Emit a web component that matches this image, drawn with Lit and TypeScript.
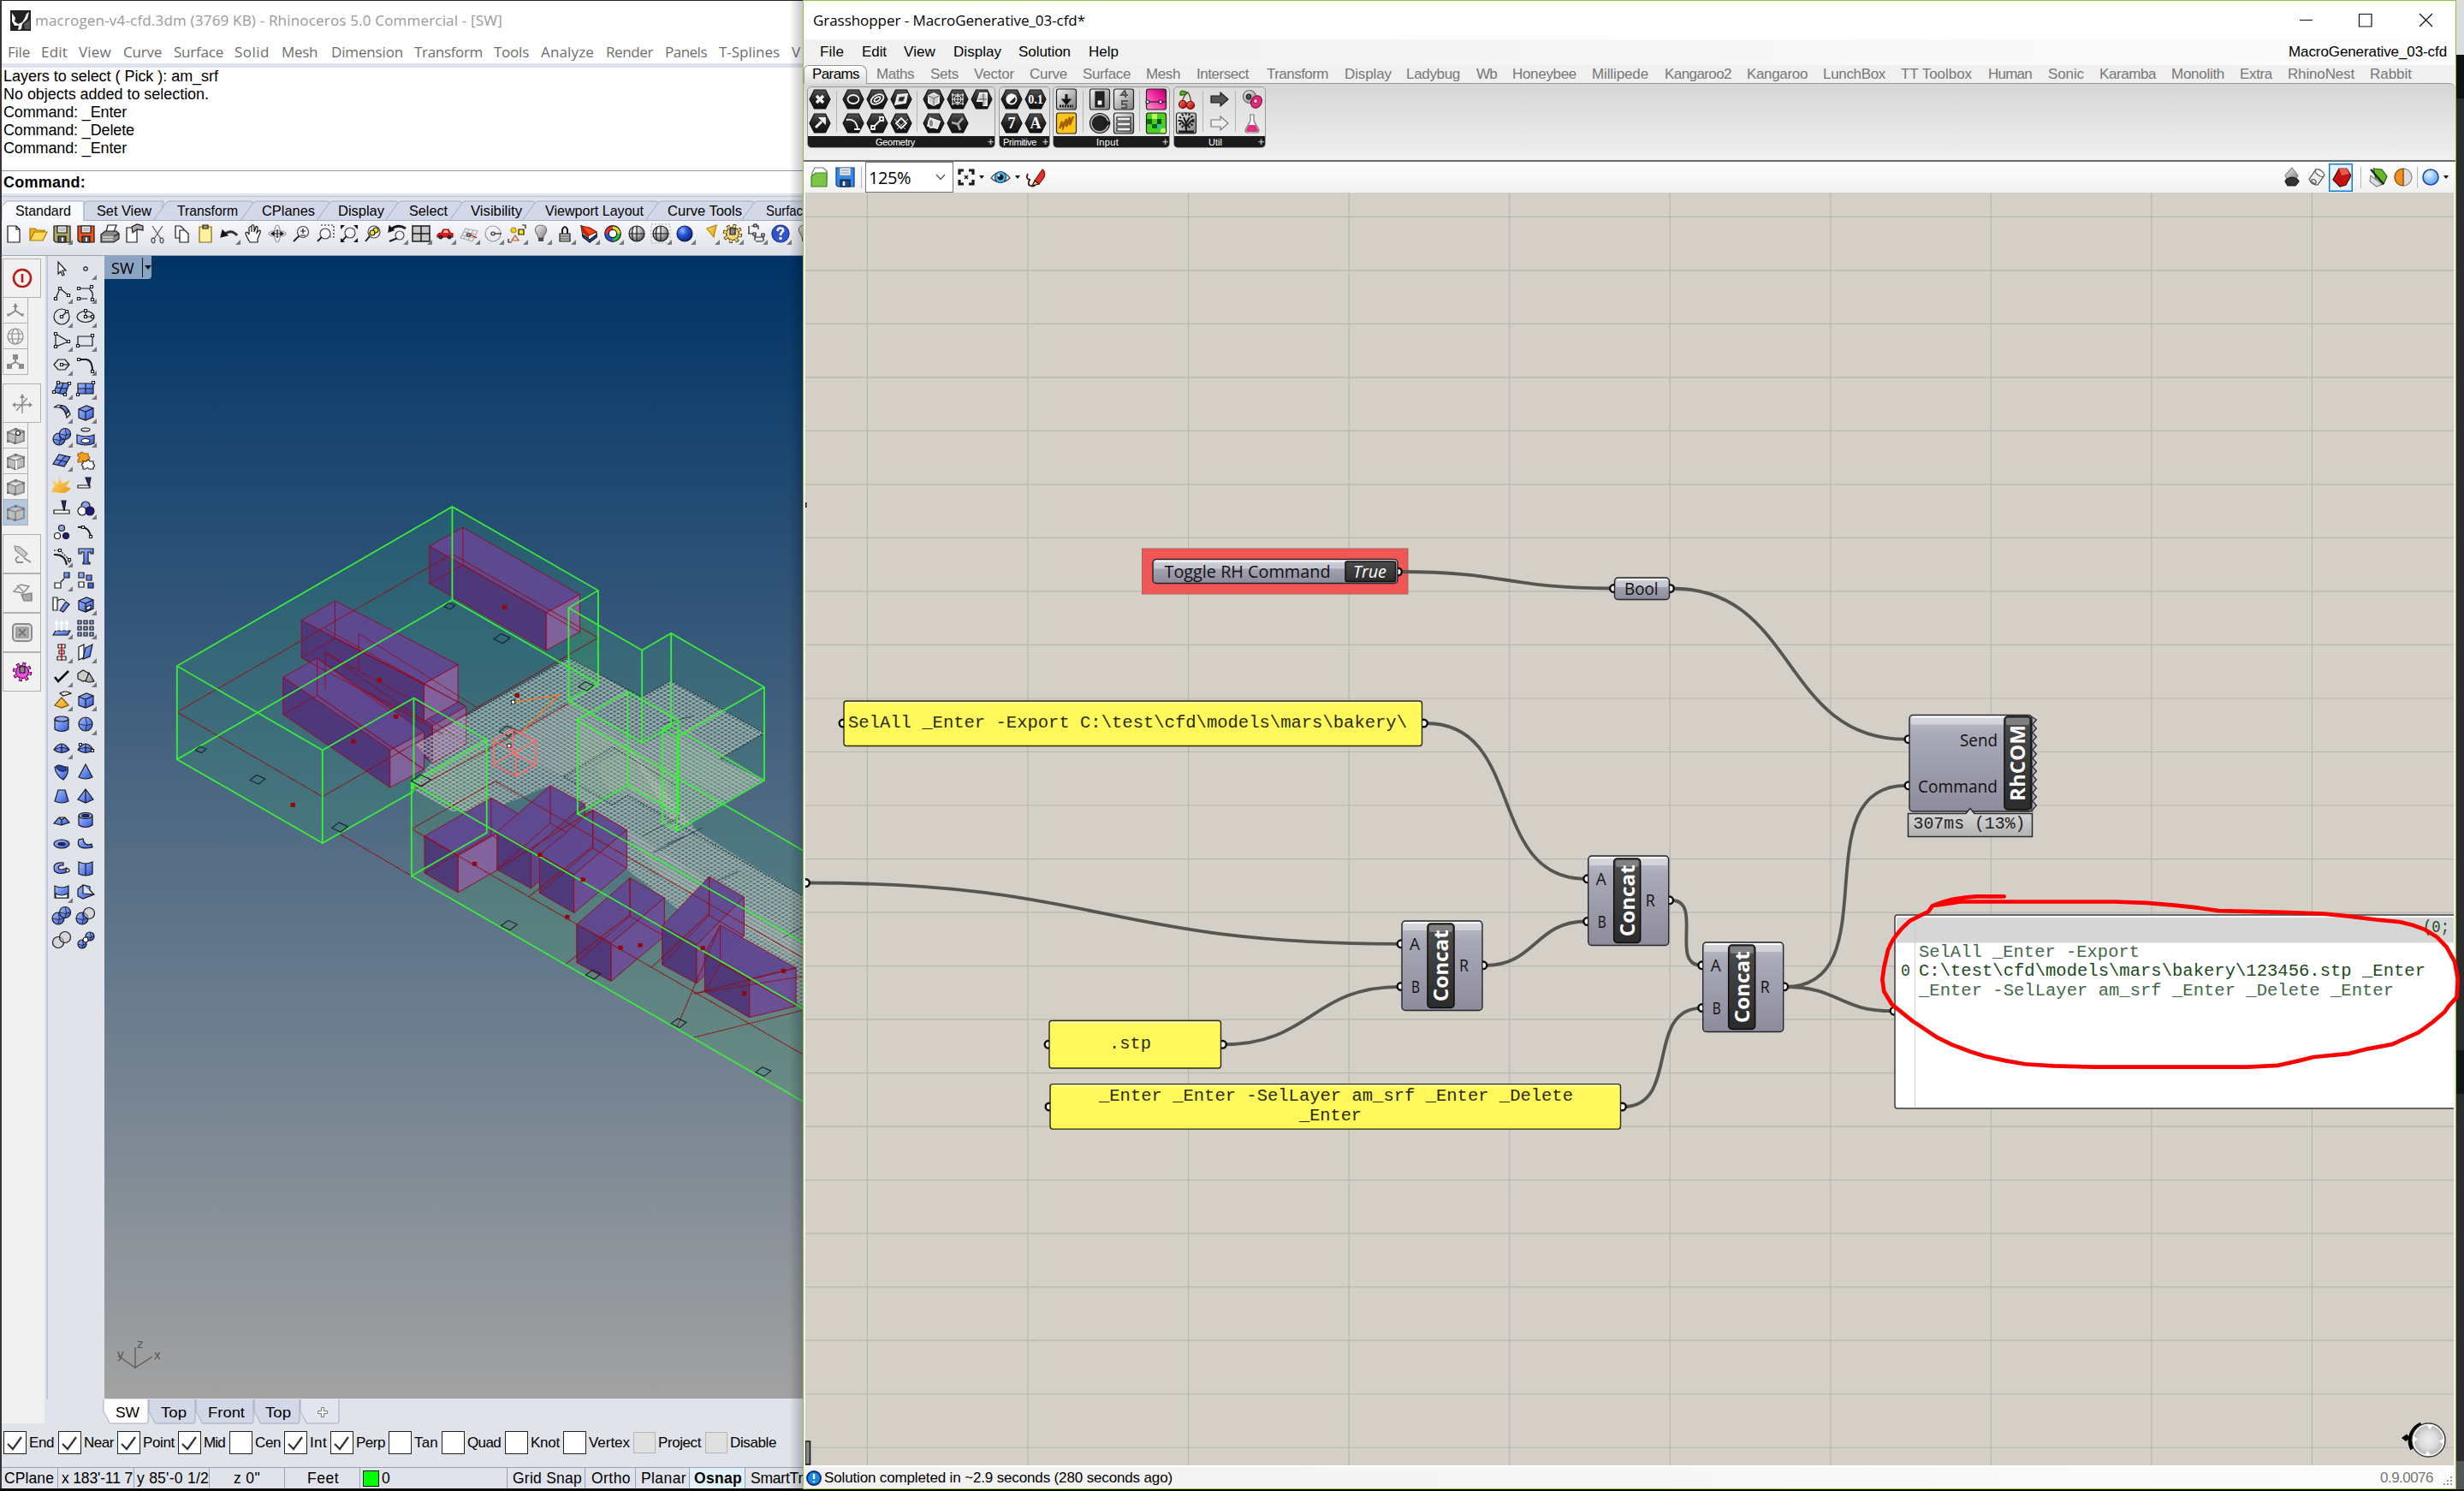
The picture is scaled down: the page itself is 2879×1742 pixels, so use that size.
import { LitElement, html, css, svg } from "lit";
import { customElement, property } from "lit/decorators.js";
import { unsafeSVG } from "lit/directives/unsafe-svg.js";
import { styleMap } from "lit/directives/style-map.js";

type Span = [string, number, number];

/* ---------- text that keeps a fixed advance width ---------- */
@customElement("fit-label")
class FitLabel extends LitElement {
  @property() text = "";
  @property({ type: Number }) w = 0;
  static styles = css`
    :host { display: block; flex: none; white-space: pre; overflow: visible; }
    span { display: inline-block; }
  `;
  firstUpdated() {
    this.style.width = `${this.w}px`;
    const s = this.renderRoot.querySelector("span") as HTMLElement;
    const natural = s.getBoundingClientRect().width;
    if (this.w && natural) s.style.letterSpacing = `${(this.w + 1 - natural) / this.text.length}px`;
  }
  render() { return html`<span>${this.text}</span>`; }
}

/* items laid in a row; the gap before each comes from its start and the previous end */
const flow = (items: Span[], origin: number, cls = "") => {
  let prev = origin;
  return items.map(([t, a, b]) => {
    const gap = a - prev;
    prev = b;
    return html`<fit-label class=${cls} .text=${t} .w=${b - a} style=${styleMap({ marginLeft: gap + "px" })}></fit-label>`;
  });
};
const space = (n: number) => html`<div style=${styleMap({ width: n + "px" })}></div>`;

/* ---------- icons, drawn around 0,0 in a 28px cell ---------- */
const DEFS = `<defs>
<linearGradient id="bl" x1="0" y1="0" x2="1" y2="1"><stop offset="0" stop-color="#a9bdff"/><stop offset=".5" stop-color="#6a8cf0"/><stop offset="1" stop-color="#2f52cc"/></linearGradient>
<radialGradient id="bb" cx=".35" cy=".3" r=".75"><stop offset="0" stop-color="#9fc0ff"/><stop offset=".4" stop-color="#2a5ae0"/><stop offset="1" stop-color="#0a1c70"/></radialGradient>
<radialGradient id="gb" cx=".35" cy=".3" r=".8"><stop offset="0" stop-color="#fff"/><stop offset=".5" stop-color="#b4b4b4"/><stop offset="1" stop-color="#444"/></radialGradient>
<linearGradient id="gy" x1="0" y1="0" x2="1" y2="1"><stop offset="0" stop-color="#f4f4f4"/><stop offset="1" stop-color="#7d7d7d"/></linearGradient>
<linearGradient id="or" x1="0" y1="0" x2="1" y2="1"><stop offset="0" stop-color="#ffe27a"/><stop offset="1" stop-color="#f0930c"/></linearGradient>
<linearGradient id="dk" x1="0" y1="0" x2="0" y2="1"><stop offset="0" stop-color="#555"/><stop offset=".5" stop-color="#222"/><stop offset="1" stop-color="#111"/></linearGradient>
<linearGradient id="rd" x1="0" y1="0" x2="1" y2="1"><stop offset="0" stop-color="#ff7a6a"/><stop offset="1" stop-color="#a00000"/></linearGradient>
<linearGradient id="pk" x1="0" y1="1" x2="1" y2="0"><stop offset="0" stop-color="#ff9ad0"/><stop offset=".6" stop-color="#f020a0"/><stop offset="1" stop-color="#a00060"/></linearGradient>
<radialGradient id="sb" cx=".4" cy=".3" r=".7"><stop offset="0" stop-color="#e4f4ff"/><stop offset="1" stop-color="#5aa4ee"/></radialGradient>
</defs>`;
const defs = html`<svg class="defs" width="0" height="0">${unsafeSVG(DEFS)}</svg>`;
const icon = (s: string, more = false) => html`<svg class="ic" width="28" height="28" viewBox="-14 -14 28 28">${unsafeSVG(
  `<g fill="none" stroke="#1a1a1a" stroke-width="1.2">${s}</g>` + (more ? `<path d="M13 7V13H7Z" fill="#777"/>` : "")
)}</svg>`;

const floppy = (c: string) => `<path d="M-9-9H10V10H-7L-9 8Z" fill="${c}"/><path d="M-5-9H6V-1H-5Z" fill="#e8e8e8"/><path d="M-3-6H4M-3-4H4" stroke="#999"/><path d="M-4 3H5V10H-4Z" fill="#555"/><path d="M1 4.500V9" stroke="#fff" stroke-width="2"/>`;
const lens = (x = 2, y = -2, r = 6.5) => `<circle cx="${x}" cy="${y}" r="${r}" fill="#f4f5f8" stroke="#444"/><path d="M${x - r * 0.7} ${y + r * 0.7}L-9 9" stroke-width="1.900"/>`;
const bulb = `<path d="M0-10C-5-10-8-6-6-2C-5 1-3 2-3 5H3C3 2 5 1 6-2C8-6 5-10 0-10Z" fill="url(#gy)" stroke="#777"/><path d="M-3 6H3M-3 8H3" stroke-width="1.600"/>`;
const globe = `<circle r="9" fill="url(#gb)"/><path d="M-9 0H9M0-9V9M-4-8Q-7 0-4 8"/>`;
const gear = (c: string, k: string) => `<circle r="7.500" fill="${c}" stroke="${k}"/><circle r="9" stroke="${k}" stroke-width="4.500" stroke-dasharray="3.600 3.480"/><circle r="8.600" stroke="${c}" stroke-width="3.200" stroke-dasharray="2.400 4.350" stroke-dashoffset="-.6"/><path d="M-3-6H3V1H-3Z" fill="#888"/>`;
const page = (x: number, y: number, w: number, h: number) => `<path d="M${x} ${y}H${x + w - 4}L${x + w} ${y + 4}V${y + h}H${x}Z" fill="#fff"/>`;

const STD: [string, boolean?][] = [
  [`<path d="M-7-9H3L7-5V10H-7Z" fill="#fff"/><path d="M3-9V-5H7"/>`],
  [`<path d="M-9 7V-6H-3L-1-4H8V-1" fill="#f0b020" stroke="#a87800"/><path d="M-9 8L-4-2H11L6 8Z" fill="#ffd95a" stroke="#a87800"/>`],
  [floppy("#aaa763"), true],
  [floppy("#f2521b")],
  [`<path d="M-4-2L-2-10H8L5-2Z" fill="#fff"/><path d="M-10 1L-5-3H8L11 0V6L5 10H-10Z" fill="#888"/><path d="M-8 4H4M-8 7H4" stroke="#fff"/><path d="M5 3L11 0" />`],
  [`<path d="M-8-7H4V10H-8Z" fill="#fff"/><path d="M-2-8L4-11L11-9V-4L4-5L-1-1Z" fill="#aaa"/>`],
  [`<path d="M-6-9L4 6M6-9L-4 6" stroke="#555"/><ellipse cx="-5" cy="8" rx="2" ry="2.800" stroke="#444"/><ellipse cx="5" cy="8" rx="2" ry="2.800" stroke="#444"/>`],
  [page(-7, -9, 10, 14) + page(-2, -4, 10, 14)],
  [`<path d="M-7-8H7V10H-7Z" fill="#fff3a0" stroke="#7a6a10"/><path d="M-3-10H3V-6H-3Z" fill="#bba24a"/>`],
  [`<path d="M-6 1Q2-6 9 2" stroke="#333" stroke-width="3"/><path d="M-10 4L-8-4L-2 2Z" fill="#111"/>`, true],
  [`<path d="M-4 10Q-9 2-9-1Q-7-3-5 1L-5-7Q-3-10-2-7V-2-9Q0-12 1-8V-2L3-8Q5-10 5-6L4-1L7-4Q9-4 8-1L5 6V10Z" fill="#fff"/>`],
  [`<ellipse rx="10" ry="3.500" stroke="#999"/><ellipse rx="3.500" ry="10" stroke="#999"/><path d="M-5 0H5M0-5V5"/><path d="M-7 0l3-2v4zM7 0l-3-2v4z" fill="#111"/>`],
  [lens() + `<path d="M-1-3H5M2-6V0M-1 2H5"/>`],
  [lens(0, 0, 6) + `<path d="M-5-10H10V4H6" stroke-dasharray="2 2"/>`],
  [lens(1, -1, 6) + `<path d="M-10-10h5l-5 5zM10-10h-5l5 5zM-10 10h5l-5-5zM10 10h-5l5-5z" fill="#111" stroke="none"/>`],
  [lens(1, -2, 7) + `<circle cx="3" cy="-4" r="3" fill="#ffe600"/><circle cx="-1" cy="-1" r="3" fill="#ffe600"/>`],
  [lens(3, 2, 5) + `<path d="M-7-5Q1-12 10-6" stroke-width="3"/><path d="M-10-2L-9-9L-4-4Z" fill="#111"/>`, true],
  [`<path d="M-10-9H10V9H-10ZM0-9V9M-10 0H10" fill="#c6c6c6" stroke-width="1.500"/>`, true],
  [`<path d="M-9 2Q-8-1-4-1L-2-5H4L6-1L9 0V4H-9Z" fill="#e81a1a" stroke="#a00"/><path d="M-1-4H3L4-1H-2Z" fill="#fbb" stroke="none"/><circle cx="-5" cy="4" r="2" fill="#333"/><circle cx="5" cy="4" r="2" fill="#333"/>`, true],
  [`<path d="M-4-6L10-3L4 9L-10 5ZM0-5L-6 6M5-4L-1 7M-6-2L8 1M-8 2L6 5" stroke="#aaa"/><path d="M-2 0h3v3h-3z" fill="#fff"/><path d="M1 1L9 5" stroke="#c00"/>`, true],
  [`<circle r="9" stroke="#999"/><circle r="2"/><path d="M2 0H10"/>`, true],
  [`<circle cx="-4" cy="-4" r="3" fill="#ffcc20" stroke="#a80"/><path d="M2-5H8V1H2Z" fill="#ffe600"/><path d="M-2 2L2 8H-6Z" stroke="#c05020"/><path d="M6-10H10V-6M-10 6V10H-6"/>`, true],
  [bulb, true],
  [`<path d="M-6 0H6V9H-6Z" fill="#bbb"/><path d="M-3 0V-5Q0-11 3-5V0" stroke-width="2"/><path d="M-5 3H5M-5 6H5" stroke="#555"/>`, true],
  [`<path d="M-9-9L-7 3L1 10L9 4V-1Z" fill="#fff"/><path d="M-9-9L1-7L9-2L0 2Z" fill="#ff4818" stroke="#801800"/><path d="M-9-9L0 2L0 6L-8-2Z" fill="#b82a08" stroke="none"/><path d="M-7 1L1 7L9 1V4L1 10L-7 4Z" fill="#1c50c8"/>`, true],
  [`<circle r="7" stroke="#f03030" stroke-width="4.500"/><path d="M0-7A7 7 0 0 1 7 0" stroke="#e0e020" stroke-width="4.500"/><path d="M7 0A7 7 0 0 1 0 7" stroke="#20c040" stroke-width="4.500"/><path d="M0 7A7 7 0 0 1-7 0" stroke="#3050e0" stroke-width="4.500"/><circle r="9.300"/><circle r="4.700" fill="#fff"/>`, true],
  [globe],
  [`<path d="M-11-11H11V11H-11Z" stroke="#ccc" stroke-width="2" stroke-dasharray="2 2"/>` + globe, true],
  [`<circle r="9" fill="url(#bb)" stroke="#124"/>`, true],
  [`<path d="M-2-6L9-10L6 4Z" fill="url(#or)" stroke="#a80"/>`, true],
  [gear("#f5d878", "#4a3a00"), true],
  [`<path d="M-9-9V0M-6-9H2V-5M-10 0H-2V8M-2 4H8V9M-1 9H7"/><path d="M-3-11h3v3h-3zM-4-1h3v3h-3zM6 0h3v3h-3z" fill="#fff"/>`, true],
  [`<circle r="10" fill="#3355cc" stroke="#1c2f90"/><path d="M-3.500-3Q-3-7 0-6.500Q4-6 3-3Q0-1 0 2" stroke="#fff" stroke-width="2.600"/><circle cy="5.500" r="1.200" fill="#fff" stroke="#fff"/>`, true],
  [bulb],
];

/* side palette pieces */
const dot = (x: number, y: number) => `<path d="M${x - 1.5} ${y - 1.5}h3v3h-3z" fill="#fff"/>`;
const cube = (c: string) => `<path d="M-8-4L1-8L9-5V5L0 9L-8 6Z" fill="${c}"/><path d="M-8-4L0-1L9-5M0-1V9"/>`;
const ball = (x: number, y: number, r: number, c = "url(#bl)") => `<circle cx="${x}" cy="${y}" r="${r}" fill="${c}"/><path d="M${x - r} ${y}Q${x} ${y + 3} ${x + r} ${y}M${x} ${y - r}Q${x + 3} ${y} ${x} ${y + r}" stroke-width=".8"/>`;
const B = "url(#bl)";
const PAL: [string, boolean?][] = [
  [`<path d="M-4-8V6L-1 3L1 8L3 7L1 2H5Z" fill="#fff"/>`], [`<circle r="2.200"/>`, true],
  [`<path d="M-7 7L-2-5L8 3"/>` + dot(-7, 7) + dot(-2, -5) + dot(8, 3), true], [`<path d="M-8-5H4Q11 1 7 7M-8 7H2"/>` + dot(-8, -5) + dot(-8, 7) + dot(7, -7) + dot(8, 8), true],
  [`<circle r="9"/><path d="M0 0L6-6"/>` + dot(0, 0) + dot(6, -6), true], [`<ellipse rx="10" ry="6.500"/><path d="M0-7V0H8"/>` + dot(0, 0) + dot(8, 0) + dot(0, -7), true],
  [`<path d="M-7-8L8 1L-7 7Z"/>` + dot(-7, -8) + dot(8, 1) + dot(-7, 7), true], [`<path d="M-9-5H8V6H-9Z"/>` + dot(8, -6) + dot(-9, 6), true],
  [`<path d="M-9 0L-4-6H4L9 0L4 6H-4Z"/><path d="M0 0H9"/>` + dot(0, 0), true], [`<path d="M-8-6H1Q8-5 8 8" stroke-width="2"/>` + dot(-8, -6) + dot(8, 8), true],
  [`<path d="M-4-7L9-6L4 7L-9 4ZM2-6L-3 6M-7-1L7 0" fill="${B}"/>` + dot(-4, -7) + dot(9, -6) + dot(4, 7) + dot(-9, 4), true], [`<path d="M-9-6H9V6H-9ZM0-6V6M-9 0H9" fill="${B}"/>` + dot(9, -7) + dot(-9, 7), true],
  [`<path d="M-9-6Q4-8 6 6L10 2Q7-9-4-9Z" fill="#fff"/><path d="M-2-7Q4-4 5 2L8-1Q6-8 1-8Z" fill="${B}"/>`, true], [cube(B), true],
  [ball(-3, 3, 7) + ball(4, -3, 6.500), true], [`<ellipse cy="-8" rx="5" ry="2"/><path d="M-10-2Q0 2 10-2V8Q0 12-10 8Z" fill="${B}"/><ellipse cy="5" rx="5" ry="2.500" fill="#fff"/>`, true],
  [`<path d="M-10 4L-3-7L10-4L3 7ZM-6-1L7 2M4-5L-4 5" fill="${B}"/>`, true], [`<path d="M-9-8H-6Q-5-12-2-8H3V-5Q7-3 3-1V2H-1Q-3-1-5 2H-9V-1Q-5-3-9-5Z" fill="#f0a020" stroke="#a86000"/><path d="M-3 1H1Q3-3 5 1H9V4Q12 6 9 8V10H4Q2 7 0 10H-3V7Q-6 5-3 3Z" fill="#fff"/>`],
  [`<path d="M-12 9L-8 1L-12-5L-4-1L-3-9L1-1L10-5L5 2L11 5L4 10Z" fill="url(#or)" stroke="none"/>`], [`<path d="M-9 1H5V4H-9Z" fill="#fff"/><path d="M0-8H6L4 2Z" fill="#1c2f90"/>`],
  [`<path d="M-9 2H9V6H-9Z" fill="#fff"/><path d="M0-9H5L3 3Z" fill="#1c2f90"/>`], [`<circle cx="0" cy="-3" r="5" fill="#8fa4f0"/><circle cx="-4" cy="3" r="5" fill="#fff"/><circle cx="5" cy="3" r="5" fill="#1c1c80"/>`, true],
  [`<circle cx="0" cy="-5" r="3.500" fill="#8fa4f0"/><circle cx="-5" cy="4" r="3.500" fill="#fff"/><circle cx="5" cy="4" r="3.500" fill="#1c1c80"/>`], [`<path d="M-9-6Q4-8 6 5" stroke-width="1.800"/>` + dot(-3, -6) + dot(6, 5)],
  [`<path d="M-9-2Q4-3 6 10" stroke-width="2"/><path d="M-9-7H-2L9 4V8" stroke-dasharray="2 1.500"/>` + dot(-2, -7) + dot(9, 4), true], [`<path d="M-8-9H9V-3H6V-5H3V7H5V9H-3V7H-2V-5H-5V-3H-8Z" fill="${B}"/>`],
  [`<path d="M-8 3H-1V9H-8Z" fill="#fff"/><path d="M3-9H9V-3H3Z" fill="${B}"/><path d="M-1 2L3-2"/>`, true], [`<path d="M-8-9h6v6h-6zM1-6h6v6h-6zM3 3h6v6h-6z" fill="${B}"/><path d="M-8 2h6v6h-6z" fill="#fff"/>`],
  [`<path d="M-10-8H-5V7H-10Z" fill="#fff"/><path d="M-2 7L5-3L9 0L2 9Z" fill="${B}"/><path d="M-5-4Q1-8 4-4"/>`], [cube(B) + `<path d="M1 3L6 1V5L1 7Z" fill="#fff"/>`, true],
  [`<path d="M-10 8L-7 3H10L7 8Z" fill="${B}"/><path d="M-6 3V-7M0 3V-7M6 3V-7M-8-5L-6-8L-4-5M-2-5L0-8L2-5M4-5L6-8L8-5" stroke="#fff" stroke-width="1.700"/>`, true], [[-9, -2, 5].map(x => [-9, -2, 5].map(y => `<path d="M${x} ${y}h4v4h-4z" fill="#8fa4f0"/>`).join("")).join(""), true],
  [`<path d="M-4-9H4V-5H-4ZM-3-2H3V2H-3ZM-5 5H5V9H-5Z" fill="#fff"/><path d="M0-10V10" stroke="#e01010" stroke-width="1.800"/>`, true], [`<path d="M-8-6L-2-9V6L-8 9Z" fill="#fff"/><path d="M0-5L8-9L5 5L-3 8Z" fill="${B}"/>`, true],
  [`<path d="M-8 1L-4 6L8-6" stroke="#111" stroke-width="2.600"/>`, true], [`<path d="M-9-3L-3-7L3-4V4L-3 6L-9 3Z" fill="#ccc"/><path d="M4-4L10 6Q5 8 0 6Z" fill="url(#gy)"/>`, true],
  [`<path d="M0-3L8 6L0 9L-8 6Z" fill="url(#or)" stroke="#805000"/><path d="M-2-8Q4-12 11-8L2-5Z" fill="#eee"/>`, true], [cube(B), true],
  [`<path d="M-8-6V6Q0 11 8 6V-6" fill="${B}"/><ellipse cy="-6" rx="8" ry="3" fill="#8fa4f0"/>`], [ball(0, 0, 8), true],
  [`<path d="M-9 2Q0-12 9 2Q0 9-9 2ZM-9 2Q0-3 9 2M0-5V5" fill="${B}"/>`, true], [`<path d="M-9 2Q0-12 9 2Q0 9-9 2ZM-9 2Q0-3 9 2M0-5V5" fill="${B}"/>` + dot(-6, -4) + dot(8, 3)],
  [`<path d="M-8-6L7-6Q9 2 2 9Q-7 4-8-6Z" fill="${B}"/><ellipse cx="-2" cy="-4" rx="6" ry="3" transform="rotate(20)" fill="#2444b8"/>`], [`<path d="M0-9L8 6Q0 10-8 6Z" fill="${B}"/>`],
  [`<path d="M-4-7H4L8 6Q0 10-8 6Z" fill="${B}"/>`], [`<path d="M0-8L9 4L0 8L-9 4ZM0-8V8" fill="${B}"/>`],
  [`<path d="M-9 4L-3-3H4L9 3L0 6ZM-3-3L0 0L4-3M0 0V6" fill="${B}"/>`], [`<path d="M-8-5V6Q0 11 8 6V-5" fill="${B}"/><ellipse cy="-5" rx="8" ry="3.500" fill="#8fa4f0"/><ellipse cy="-5" rx="4" ry="1.600" fill="#1c2f90"/>`],
  [`<ellipse rx="9" ry="5" fill="${B}"/><ellipse rx="4" ry="1.500" fill="#1c2f90"/>`], [`<path d="M-8-5Q-12 8 8 4L7 0Q-2 3-3-6Z" fill="${B}"/>`],
  [`<path d="M2-6Q-12-7-8 4Q-2 9 8 4L6 0Q-3 4-4 0Q-3-4 2-3Z" fill="${B}"/><circle cx="7" cy="3" r="2" fill="#fff"/>`], [`<path d="M-8-7Q0-3 8-7V7Q0 11-8 7Z" fill="${B}"/><path d="M0-5V9"/>`],
  [`<path d="M-8-7Q0-3 8-7V7H-8Z" fill="${B}"/><path d="M-7 2Q0 6 7 2V7H-7Z" fill="#fff"/>`, true], [`<path d="M-9-3L-3-8L5-6V-2L10 3L-3 8L-9 5ZM-3-8V2L10 3" fill="${B}"/>`],
  [ball(-4, 3, 7) + ball(4, -4, 6.500)], [ball(-4, 3, 7) + `<circle cx="4" cy="-3" r="6.500" fill="#ccc8"/>`],
  [`<circle cx="-4" cy="3" r="6.500" fill="#ccc8"/><circle cx="4" cy="-3" r="6.500" fill="#ccc8"/>`], [ball(-4, 5, 5) + ball(5, -4, 5) + `<circle r="3" fill="#fff"/>`],
];

const G = "#8b8b8b";
const greyBox = `<path d="M-9-4L0-8L10-5V6L0 9L-9 6ZM-9-4L0-1L10-5M0-1V9" fill="#bdbdbd" stroke="${G}" stroke-width="1.800"/><path d="M-10-5h3v3h-3zM8-6h3v3h-3zM-2 7h3v3h-3zM-10 5h3v3h-3zM-1-9h3v3h-3z" fill="#777" stroke="none"/>`;
const TS: [string, number][] = [
  [`<circle r="10" stroke="#b71c1c" stroke-width="2.600"/><path d="M0-5V5" stroke="#b71c1c" stroke-width="2.600"/>`, 1],
  [`<path d="M0-8V0L-9 6M0 0L9 6" stroke="${G}" stroke-width="2"/><path d="M-3-4L0-9L3-4ZM-10 3L-5 4L-9 7ZM10 3L5 4L9 7Z" fill="${G}" stroke="none"/>`, 0],
  [`<circle r="9" stroke="${G}"/><ellipse rx="4" ry="9" stroke="${G}"/><path d="M-9-3H9M-9 3H9" stroke="${G}"/>`, 0],
  [`<path d="M0-6V0L-7 4M0 0L7 4" stroke="${G}" stroke-width="2"/><path d="M-3-9h6v6h-6zM-10 2h6v6h-6zM4 2h6v6h-6z" fill="${G}" stroke="none"/>`, 0],
  [`<path d="M-11 2H11M0-8V12M6-6L-7 9" stroke="${G}" stroke-width="1.400"/><path d="M8-1L12 2L8 5ZM-8-1L-12 2L-8 5ZM-3-6L0-11L3-6Z" fill="${G}" stroke="none"/>`, 2],
  [greyBox + `<circle cx="3" cy="-3" r="2.500" fill="#fff"/>`, 0],
  [greyBox + `<path d="M1-1V9" stroke="#fff" stroke-width="2"/>`, 0],
  [greyBox, 0],
  [greyBox, 3],
  [`<path d="M-9-9L-3-8L6 0L2 4L-8-4Z" fill="#ccc" stroke="${G}"/><path d="M-4 3Q-10 6-6 10H1M2 5L10 10" stroke="${G}" stroke-width="1.800"/>`, 2],
  [`<path d="M-10-2L-2-10L8-8L1 0ZM-6-9L2-1" stroke="${G}" stroke-width="1.400"/><path d="M-1 2L11 0V9H2Z" fill="#aaa" stroke="#777"/>`, 1],
  [`<rect x="-11" y="-10" width="22" height="20" rx="4" fill="#ddd" stroke="${G}" stroke-width="2"/><path d="M-7-6H7V6H-7Z" fill="#aaa" stroke="${G}"/><path d="M-4-4L4 4M4-4L-4 4" stroke="#777" stroke-width="2"/>`, 1],
  [gear("#f050e0", "#400040"), 1],
];

/* Grasshopper ribbon */
const hex = (s: string) => `<path d="M-12 0L-6.500-11H6.500L12 0L6.500 11H-6.500Z" fill="url(#dk)" stroke="#111"/><g stroke="#f2f2f2" stroke-width="1.800">${s}</g>`;
const tile = (s: string, c = "url(#gy)") => `<rect x="-11.500" y="-12" width="23" height="24" rx="2.500" fill="${c}" stroke="#222"/>${s}`;
const glyph = (t: string, fs: number) => `<text y="${fs * 0.36}" font-family="Liberation Serif, serif" font-weight="bold" font-size="${fs}" fill="#fff" stroke="none" text-anchor="middle">${t}</text>`;
const RIBBON: { name: string; w: number; gap: number; label: Span; pad: number; cols: (string[] | null)[] }[] = [
  { name: "Geometry", w: 220, gap: 4, label: ["Geometry", 80, 125], pad: 1, cols: [
    [hex(`<path d="M-4-4L4 4M4-4L-4 4" stroke-width="3.400"/>`), hex(`<path d="M-5 5L2-2" stroke-width="3"/><path d="M0-6H6V0Z" fill="#fff"/>`)], null,
    [hex(`<ellipse rx="6.500" ry="5"/>`), hex(`<path d="M-8-4Q3-6 5 6"/><path d="M1 7H8" />`)],
    [hex(`<g transform="rotate(-30)"><ellipse rx="8" ry="5"/><ellipse rx="4" ry="2"/></g>`), hex(`<path d="M-5 5L5-5"/><path d="M-7 3h4v4h-4zM3-7h4v4h-4z" fill="#222"/>`)],
    [hex(`<path d="M-4-5L7-6L5 4L-7 6Z" fill="#ddd"/><path d="M-2-2L4-3L2 2L-3 2Z" fill="#222" stroke="#555" stroke-width="1"/>`), hex(`<path d="M0-6L6 0L0 6L-6 0Z"/><path d="M-8-5L5 7M8-5L-5 7" stroke-width=".8"/>`)], null,
    [hex(`<path d="M-6-4L0-7L6-4V4L0 7L-6 4Z" fill="#ccc"/><path d="M-6-4L0-1V7M0-1L6-4" stroke="#666" stroke-width="1"/>`), hex(`<path d="M-4-6L7-2L4 6L-7 3Z" fill="#ddd"/><ellipse cx="-3" rx="3" ry="5" fill="#888"/>`)],
    [hex(`<path d="M-6-7V7M0-7V7M6-7V7M-7-5H7M-7 0H7M-7 5H7" stroke-width="1"/><circle r="4" stroke-width="1"/>`), hex(`<path d="M-7-1L0 1L6-6M0 1L3 8" stroke="#aaa" stroke-width="2.600"/>`)],
    [hex(`<path d="M-2-7H6V7H2V2H-5Z" fill="#ccc"/><path d="M2-7V7M-4 0H6" stroke="#555" stroke-width="1"/>`)],
  ] },
  { name: "Primitive", w: 60, gap: 4, label: ["Primitive", 5, 43], pad: 1, cols: [
    [hex(`<circle r="5.500"/><path d="M-4 4A5.500 5.500 0 0 1 4-4Z" fill="#fff"/>`), hex(glyph("7", 18))],
    [hex(glyph("0.1", 14)), hex(glyph("A", 18))],
  ] },
  { name: "Input", w: 137, gap: 3, label: ["Input", 51, 76], pad: 2, cols: [
    [tile(`<path d="M0-6V2" stroke-width="3"/><path d="M-5 0H5L0 6Z" fill="#111"/><path d="M-8 8H8" stroke-width="3" stroke-dasharray="2 1"/>`), tile(`<path d="M-8 6L-5-2L-4 5L0-5L0 4L4-7L4 2L8-8" stroke="#a06000" stroke-width="2.400"/>`, "#ffc61a")], null,
    [tile(`<path d="M-5-9H5V9H-5Z" fill="#222"/><path d="M-3 1H3V7H-3Z" fill="#fff"/>`), `<circle r="11.500" fill="#aaa"/><circle r="8.500" fill="#222"/><path d="M6-4L12 0L6 4Z" fill="#222"/>`],
    [tile(`<path d="M2-11L-3-5H5M2-9V-2M5 2H-2V6Q5 4 3 10H-3" stroke="#555" stroke-width="2"/>`), tile(`<path d="M-8-7H8V-3H-8ZM-8-1H8V3H-8ZM-8 5H8V9H-8Z" fill="#eee"/>`)], null,
    [tile(`<path d="M-11 3H11" stroke="#111"/><circle cx="-10" cy="3" r="2" fill="#fff"/><circle cx="5" cy="3" r="2" fill="#fff"/>`, "url(#pk)"), tile(`<path d="M-11-5h6v6h-6zM-5 1h6v5h-6z" fill="#0a6a0a" stroke="none"/><path d="M-5-11h6v6h-6zM5 6h6v5h-6z" fill="#b8ff60" stroke="none"/><path d="M1-5h5v6h-5z" fill="#085008" stroke="none"/><path d="M1 1h5v6h-5z" fill="#30c890" stroke="none"/>`, "#4cd020")],
  ] },
  { name: "Util", w: 108, gap: 4, label: ["Util", 41, 56], pad: 1, cols: [
    [`<path d="M-5 4Q-3-5 2-8Q5-4 6 5" stroke="#5a3010"/><path d="M1-8Q-8-13-7-5Q-2-4 1-8Z" fill="#58b820" stroke="#286010"/><circle cx="-4" cy="6" r="4.500" fill="url(#rd)" stroke="#700"/><circle cx="5" cy="7" r="4.500" fill="url(#rd)" stroke="#700"/>`, tile(`<path d="M0 9V0M0 4L-6-3M0 4L6-3M0 0L-3-7M0 0L4-7M-6-3H-9M6-3H9" stroke-width="2"/><circle cy="-3" r="8" stroke-dasharray="2 2" stroke-width="3"/><path d="M-9 10H9" stroke-width="3"/>`, "url(#gy)")], null,
    [`<path d="M-10-4H1V-8L10 0L1 8V4H-10Z" fill="#555"/>`, `<path d="M-10-4H1V-8L10 0L1 8V4H-10Z" fill="#eee" stroke="#777"/>`], null,
    [`<circle cx="-3" cy="-3" r="7.500" fill="url(#gy)" stroke="#666"/><circle cx="-4" cy="-3" r="2.800" fill="#555"/><ellipse cx="5" cy="3" rx="6" ry="7.500" transform="rotate(30 5 3)" fill="#e02a7a" stroke="#801040"/><circle cx="4" cy="2" r="2.500" fill="#ffc0dc" stroke="#a02060"/>`, `<path d="M-2-10H2V-3L8 8Q8 11 5 11H-5Q-8 11-8 8L-2-3Z" fill="#fff" stroke="#777"/><path d="M-4 2H4L7 8Q7 10 5 10H-5Q-7 10-7 8Z" fill="#e0307c" stroke="none"/>`],
  ] },
];

const BAR_L = {
  open: `<path d="M-5-11H5L9-7V2H-8V-5Z" fill="#fff" stroke="#777"/><path d="M-9 11V-1L-4-5H9V11Z" fill="#7cc54a" stroke="#3c8a18"/>`,
  save: `<path d="M-10-11H11V11H-8L-10 9Z" fill="#2f8ae8" stroke="#0a3c90"/><path d="M-6-11H7V-2H-6Z" fill="#e8f0f8" stroke="#7090b0"/><path d="M-4-8H5M-4-5H5" stroke="#888"/><path d="M-5 3H6V11H-5Z" fill="#1c4a90"/><path d="M-1 5V10" stroke="#fff" stroke-width="2.500"/>`,
  fit: `<path d="M-8-3V-8H-3M3-8H8V-3M8 3V8H3M-3 8H-8V3" stroke-width="3.200"/><path d="M-2-2L2 2M2-2L-2 2" stroke-width="1.600"/>`,
  eye: `<path d="M-11 1Q0-13 11 1Q0 11-11 1Z" fill="#fff" stroke="#333"/><circle r="6.500" fill="#5ab4e8" stroke="#124a80"/><circle r="3" fill="#02203c"/><circle cx="-2" cy="-2" r="1.500" fill="#fff" stroke="none"/>`,
  brush: `<path d="M-9-4Q-12 2-7 3Q-10 9-6 10Q0 12 0 6" stroke="#4a1010" stroke-width="1.800"/><path d="M-1 4L8-9Q12-6 10 0L4 8Z" fill="#e03028" stroke="#801010"/><path d="M-1 4L4 8L-4 10Z" fill="#ffb040"/>`,
  arrow: `<path d="M-3-2H3L0 2Z" fill="#111" stroke="none"/>`,
};
const BAR_R = {
  shaded: `<path d="M0-11L7-2L5 2H-6L-8-2Z" fill="url(#gy)" stroke="#888"/><path d="M-8 5Q-7 1 0 0Q7 1 8 5L4 10H-5Z" fill="#333"/>`,
  wire: `<g transform="rotate(35)"><path d="M-6-7Q0-11 6-7V7Q0 11-6 7Z" fill="#eee" stroke="#555"/><ellipse cy="-6" rx="6" ry="3" fill="#fff" stroke="#555"/><ellipse cy="6" rx="3" ry="2" stroke="#555"/></g>`,
  red: `<path d="M-3-10L6-10L11-2L5 9L-2 11L-10 3Z" fill="#c31212" stroke="#500"/><path d="M-3-10L6-10L9-4L0-2Z" fill="#e85a4a" stroke="none"/>`,
  green: `<path d="M-6-10L4-9L10-1L6 8L-1 10Z" fill="#62b82a" stroke="#285808"/><path d="M-9-2L4 8L-2 11L-10 5Z" fill="#ddd" stroke="#888"/><path d="M-9-9L6 8" stroke-width="2"/>`,
  half: `<path d="M0-10A10 10 0 0 1 0 10Z" fill="#ddd" stroke="#888"/><path d="M0-10A10 10 0 0 0 0 10Z" fill="#f09020" stroke="#904800"/>`,
  blue: `<circle r="9" fill="url(#sb)" stroke="#1c4a98" stroke-width="1.600"/>`,
};

/* ---------- 3D viewport scene ---------- */
type P = [number, number];
const pts = (p: P[]) => p.map(a => a.join(",")).join(" ");
const prism = (L: P, T: P, R: P, Bt: P, h: number, side: string) => {
  const d = (p: P): P => [p[0], p[1] + h];
  return `<g stroke="#930a22" stroke-width="1.900"><polygon points="${pts([L, T, R, Bt])}" fill="#5f4891" fill-opacity=".97"/><polygon points="${pts([L, Bt, d(Bt), d(L)])}" fill="#4e3779" fill-opacity=".97"/><polygon points="${pts([Bt, R, d(R), d(Bt)])}" fill="${side}" fill-opacity=".95"/><path fill="none" d="M${T}L${d(T)}L${d(L)}M${d(T)}L${d(R)}"/></g>`;
};
const LIGHT = "#83639d", MID = "#6a4e97";
const scene = `
<defs>
<linearGradient id="sky" x1="0" y1="0" x2="0" y2="1"><stop offset="0" stop-color="#003366"/><stop offset="1" stop-color="#a2a2a2"/></linearGradient>
<pattern id="m1" width="16" height="10" patternUnits="userSpaceOnUse"><path d="M-1-.6L17 10.600M-1 10.600L17-.6" stroke="#b4bab2" stroke-width="2.300"/></pattern>
<pattern id="m2" width="16" height="10" patternUnits="userSpaceOnUse" patternTransform="translate(4 2.500)"><path d="M-1-.6L17 10.600M-1 10.600L17-.6" stroke="#b4bab2" stroke-width="2"/></pattern>
</defs>
<rect x="122" y="299" width="816" height="1335" fill="url(#sky)"/>
<g transform="translate(120 560) scale(.52296 .48469)">
<polygon points="166,450 781,66 1107,268 1107,494 1041,535 858,640 695,750 491,877 166,675" fill="#2c9a70" fill-opacity=".2"/>
<polygon points="781,291 1107,494 491,877 166,675" fill="#2c9a70" fill-opacity=".06"/>
<polygon points="690,956 690,732 858,628 1041,535 1041,310 1205,412 1270,371 1478,501 1478,726 1330,750 1570,898 1570,1503" fill="#3c9a70" fill-opacity=".22"/>
<polygon points="690,732 1570,1278 1570,1503 690,956" fill="#6a9a5a" fill-opacity=".1"/>
<polygon points="812,570 1041,430 1205,525 1170,640 1330,850 1570,1008 1570,1275 1171,940 1090,800 1000,738 860,800 780,800 690,745" fill="url(#m1)"/>
<polygon points="1205,525 1270,485 1478,612 1378,675 1478,726 1283,847 1170,640" fill="url(#m1)"/>
<polygon points="870,645 1041,540 1200,640 1300,600 1478,726 1400,775 1300,720 1140,645 1030,716 960,680" fill="url(#m2)" opacity=".55"/>
<polygon points="1150,830 1300,930 1570,1120 1570,1170 1250,960" fill="url(#m2)" opacity=".7"/>
<polygon points="1100,690 1170,655 1270,720 1250,800 1130,750" fill="url(#m2)" opacity=".5"/>
<path d="M812 570L1041 430L1205 525L1270 485L1478 612L1378 675M1030 716L1140 645L1283 740M1030 716L1140 785L1173 762L1570 1008" fill="none" stroke="#16242a" stroke-width="2" stroke-dasharray="4 3"/>
<path d="M1205 860L1290 815M1230 900L1340 840M1260 880L1300 860M1370 970L1420 945M1250 590L1320 570M1520 1105L1570 1075" stroke="#1e3238" stroke-width="2" opacity=".7"/>
<polygon points="1061,580 1173,645 1286,720 1286,800 1173,738 1061,806" fill="#b0e090" fill-opacity=".16"/>
<polygon points="1250,602 1283,622 1478,726 1283,847 1250,826" fill="#90e890" fill-opacity=".13"/>
<polygon points="1041,310 1107,350 1107,494 1041,535" fill="#40a850" fill-opacity=".15"/>
<polygon points="690,732 858,628 858,840 695,735" fill="#b0e890" fill-opacity=".13"/>
${prism([497, 417], [572, 372], [812, 548], [737, 594], 90, LIGHT)}
${prism([730, 161], [805, 116], [1066, 278], [991, 322], 90, LIGHT)}
${prism([444, 340], [519, 293], [794, 447], [718, 493], 90, LIGHT)}
${prism([403, 477], [479, 431], [718, 609], [642, 653], 90, LIGHT)}
${prism([719, 860], [868, 768], [943, 815], [794, 907], 89, LIGHT)}
${prism([881, 850], [1000, 738], [1077, 783], [957, 895], 91, "#5c4489")}
${prism([976, 905], [1095, 797], [1171, 845], [1053, 953], 92, MID)}
${prism([1059, 1073], [1178, 961], [1255, 1009], [1136, 1118], 92, MID)}
${prism([1250, 1077], [1355, 958], [1433, 1007], [1327, 1122], 93, MID)}
${prism([1345, 1143], [1380, 1075], [1549, 1178], [1445, 1205], 92, MID)}
<polygon points="700,640 737,616 812,570 812,640 737,684" fill="url(#m1)" opacity=".9"/>
<path d="M572 372V462L497 417V506M572 372L838 551M572 462L740 560M444 430L760 614M479 521L718 700M479 431L642 560M497 417L718 583M497 360L812 548" fill="none" stroke="#930a1c" stroke-width="1.700"/>
<g fill="none" stroke="#960c0c" stroke-width="2.100" stroke-dasharray="5 1">
<path d="M166 561L781 180L1107 382L491 765ZM690 843L878 728L1570 1157M690 843L1570 1390M530 855L690 956M690 750L860 652M860 652L1041 540M951 1007L1095 885M1035 1168L1178 1050M1226 1177L1355 1047M1321 1240L1564 1198M1321 1345L1564 1280M1283 1320L1380 1075M1095 885V797M1178 1050V961M1355 1047V958M881 940L1095 797M1549 1178L1321 1240"/>
</g>
<g fill="none" stroke="#38f038" stroke-width="3.500">
<path d="M166 450L781 66L1107 268V494L781 291V66M166 450L491 653L695 527L858 628V852L690 956V732L858 628M166 450V675L491 877V653M491 877L695 752M166 675L781 291M695 527V750L690 732L1570 1279M690 956L1570 1503M1107 268L1041 310V535L1107 494M1041 310L1205 412L1270 371L1478 501V726L1283 847L1250 826V602L1286 580L1173 512L1061 580L1570 898M1041 535L1205 635L1270 595L1478 726M1205 412V635M1270 371V595M1061 580V806L1173 738V512M1173 738L1283 805M1061 806L1570 1120M1286 580V800M1250 602L1283 622V847M1283 622L1478 501"/>
</g>
<g fill="none" stroke="#15222a" stroke-width="2.200">
${([[775, 305, 12], [892, 383, 18], [219, 651, 12], [346, 723, 17], [530, 838, 18], [711, 725, 22], [908, 1074, 18], [1096, 1193, 17], [1287, 1310, 17], [1476, 1427, 17], [1080, 498, 17], [905, 606, 19]] as number[][]).map(([x, y, r]) => `<path d="M${x - r} ${y + 2}L${x - 2} ${y - r * 0.6}L${x + r} ${y - 1}L${x + 2} ${y + r * 0.7}Z"/>`).join("")}
</g>
<path d="M917 537L1020 520L930 615" fill="none" stroke="#f07828" stroke-width="3"/>
<path d="M873 630L916 603L967 630V688L923 716L873 688ZM873 630L923 658L967 630M923 658V716M916 603V660L873 688M916 660L967 688" fill="none" stroke="#ff6a6a" stroke-width="3.200"/>
<path d="M913 533h8v8h-8zM904 638h8v8h-8z" fill="#fff" stroke="#222" stroke-width="2"/>
<g fill="#980505">${([[898, 308], [618, 484], [655, 572], [560, 632], [425, 785], [926, 521], [831, 927], [977, 905], [1073, 965], [1038, 1055], [1157, 1129], [1201, 1123], [1341, 1130], [1521, 1185], [1433, 1239]] as P[]).map(([x, y]) => `<rect x="${x - 5}" y="${y - 5}" width="10" height="10"/>`).join("")}</g>
</g>
<g stroke="#5a5a5a" stroke-width="1.300" fill="none"><path d="M158 1574V1598L178 1585M158 1598L138 1584"/></g>`;

const barFont = css`
  :host { display: block; font-family: "Liberation Sans", Arial, sans-serif; font-size: 17px; color: #000; }
  .segoe { font-family: "Open Sans", "Noto Sans", sans-serif; }
  .row { display: flex; align-items: center; white-space: nowrap; overflow: hidden; box-sizing: border-box; flex: none; }
  .ic { display: block; flex: none; overflow: visible; }
  .defs { display: block; height: 0; }
`;

/* ================= Rhino ================= */
@customElement("rhino-window")
class RhinoWindow extends LitElement {
  static styles = [barFont, css`
    :host { width: 938px; height: 1742px; background: #e0e3ea; overflow: hidden; box-sizing: border-box; }
    .win { display: flex; flex-direction: column; height: 1739px; border-left: 2px solid #3a3336; border-top: 1px solid #222; box-sizing: border-box; }
    .under { height: 3px; background: #050505; }
    .title { height: 45px; background: #fff; color: #999; }
    .title svg { margin-left: 10px; }
    .menu { height: 28px; background: #fff; color: #6d6d6d; }
    .edge { height: 5px; background: #e0e3eb; flex: none; }
    .log { height: 121px; background: #fff; box-sizing: border-box; border-bottom: 1px solid #8f98ad; font-size: 18px; flex: none; }
    .log .row { height: 21px; }
    .cmd { height: 26px; background: #fff; font-weight: bold; font-size: 18px; }
    .band { height: 8px; flex: none; background: linear-gradient(#e0e3ea 3px, #bcc4d4 3px, #bcc4d4 4px, #e0e3ea 4px); }
    .tabs { display: flex; height: 24px; flex: none; overflow: hidden; }
    .tab { flex: none; height: 24px; }
    .tab svg { display: block; overflow: visible; }
    .tools { height: 41px; flex: none; display: flex; background: linear-gradient(#f6f7fa, #e0e3ea 90%); border-bottom: 1px solid #9aa3b5; box-sizing: border-box; padding-top: 1px; overflow: hidden; }
    .mid { display: flex; height: 1336px; flex: none; }
    .ts { width: 50px; height: 1364px; background: #f0f0f0; padding: 3px 0 0 1px; box-sizing: border-box; flex: none; }
    .cellb { border: 1px solid #b2b2b2; box-sizing: border-box; display: grid; place-items: center; width: 45px; height: 46px; background: #f1f1f1; }
    .cellb.small { width: 30px; height: 30px; border-top-width: 0; }
    .cellb.on { background: #b4c7e0; }
    .cellb.gap { margin-top: 10px; }
    .pal { width: 70px; flex: none; border-left: 2px solid #c3c8d6; box-sizing: border-box; margin-left: 2px; display: grid; grid-template-columns: 28px 28px; grid-auto-rows: 28px; align-content: start; padding: 1px 0 0 2px; }
    .view { position: relative; width: 816px; flex: none; margin-left: -2px; }
    .view > svg { display: block; }
    .chip { position: absolute; left: 0; top: 0; width: 55px; height: 27px; background: #8ba4c1; border-bottom-right-radius: 4px; display: flex; align-items: center; font-size: 18px; }
    .chip i { width: 1px; height: 23px; background: #111; margin-left: 10px; }
    .chip b { border: 4px solid transparent; border-top: 5px solid #111; margin: 4px 0 0 2px; }
    .vtabs { display: flex; height: 30px; margin-left: 119px; flex: none; }
    .checks { height: 27px; margin-top: 7px; font-size: 17px; }
    .box { width: 25px; height: 25px; border: 1px solid #222; background: #fff; flex: none; }
    .box.off { width: 24px; height: 23px; border-color: #b5b5b5; background: #e0e0e0; }
    .box svg { display: block; }
    .status { height: 25px; margin-top: auto; border-top: 1px solid #9aa3b5; font-size: 17.500px; }
    .cell { display: flex; align-items: center; height: 100%; border-right: 1px solid #9aa3b5; box-sizing: border-box; flex: none; }
    .cell.on { background: #e1f1fb; font-weight: bold; }
    .swatch { width: 17px; height: 17px; background: #00ff00; border: 1px solid #111; margin-left: 3px; flex: none; }
  `];

  private tab(i: number) {
    const T: Span[] = [["Standard", 18, 83], ["Set View", 113, 177], ["Transform", 207, 278], ["CPlanes", 306, 368], ["Display", 395, 449], ["Select", 478, 523], ["Visibility", 550, 610], ["Viewport Layout", 637, 752], ["Curve Tools", 780, 867], ["Surfac", 895, 938]];
    const edge = [2, 98, 179, 281, 370, 450, 525, 610, 754, 866, 980];
    const [t, a, b] = T[i], x = edge[i], w = edge[i + 1] - x, first = i === 0;
    const r = i === 0 ? w : i === 1 ? 93 : w + 12;
    const d = first ? `M0 24V7L6 1H${r}V24` : i === 1 ? `M0 24V5Q1 1 5 1H${r}L${r - 4} 24Z` : `M0 24L15 3Q16 1 19 1H${r}Q${r + 3} 1 ${r + 3} 5V24Z`;
    return html`<div class="tab" style=${styleMap({ width: w + "px" })}><svg width=${w} height="24"><path d=${d} fill=${first ? "#f8f9fc" : "#d3d8e9"} stroke="#a4abbe"/>${first ? "" : svg`<path d=${`M0 23.500H${r + 4}`} stroke="#a4abbe"/>`}<text x=${a - x} y="18" textLength=${b - a} lengthAdjust="spacingAndGlyphs" font-size="17">${t}</text></svg></div>`;
  }
  private vtab(t: string, w: number, a: number, tw: number, on = false) {
    return html`<svg class="ic" width=${w} height="30"><path d=${`M0 0V14Q2 18 5 23L7 28H${w - 3}Q${w - 1} 28 ${w - 1} 25V0`} fill=${on ? "#fff" : t ? "#d3d8e9" : "#e3e6ee"} stroke="#a4abbe"/>${t
      ? svg`<text x=${a} y="21" textLength=${tw} lengthAdjust="spacingAndGlyphs" font-size="17">${t}</text>`
      : svg`<path d="M24.500 9.500h3v4h4v3h-4v4h-3v-4h-4v-3h4z" fill="#fff" stroke="#777"/>`}</svg>`;
  }
  private check(t: string, gap: number, tw: number, tg: number, on: boolean, off = false) {
    return html`<div class="box ${off ? "off" : ""}" style=${styleMap({ marginLeft: gap + "px" })}>${on ? html`<svg width="25" height="25"><path d="M4 14L10 20L20 6" fill="none" stroke="#333" stroke-width="2.200"/></svg>` : ""}</div><fit-label .text=${t} .w=${tw} style=${styleMap({ marginLeft: tg + "px" })}></fit-label>`;
  }
  render() {
    const menu: Span[] = [["File", 9, 34], ["Edit", 48, 78], ["View", 92, 129], ["Curve", 144, 188], ["Surface", 203, 260], ["Solid", 274, 314], ["Mesh", 329, 370], ["Dimension", 387, 470], ["Transform", 484, 563], ["Tools", 577, 617], ["Analyze", 632, 693], ["Render", 708, 762], ["Panels", 777, 825], ["T-Splines", 840, 910], ["V", 925, 936]];
    const log: [string, number][] = [["Layers to select ( Pick ): am_srf", 250], ["No objects added to selection.", 239], ["Command: _Enter", 143], ["Command: _Delete", 152], ["Command: _Enter", 143]];
    const cells: [string, number, number, number, string?][] = [["CPlane", 66, 3, 57], ["x 183'-11 7", 89, 4, 82], ["y 85'-0 1/2", 88, 3, 83], ["z 0\"", 88, 28, 30], ["Feet", 88, 26, 36], ["0", 172, 3, 10, "sw"], ["Grid Snap", 91, 6, 80], ["Ortho", 59, 7, 45], ["Planar", 63, 6, 52], ["Osnap", 65, 5, 55, "on"], ["SmartTr", 90, 6, 60]];
    return html`${defs}<div class="win">
      <div class="row title segoe"><svg width="24" height="24" viewBox="0 0 24 24"><path d="M0 0H24V24H0Z" fill="#222"/><path d="M2 3L6 9L5 13L9 16L14 14L17 9L19 4L22 2L20 10L14 16L13 22L9 23L10 18L5 18L2 13Z" fill="#f2f2f2"/><path d="M16 16L23 11V22H17Z" fill="#555"/></svg>${flow([["macrogen-v4-cfd.3dm (3769 KB) - Rhinoceros 5.0 Commercial - [SW]", 41, 586]], 36)}</div>
      <div class="row menu segoe">${flow(menu, 2)}</div>
      <div class="edge"></div>
      <div class="log">${log.map(([t, w]) => html`<div class="row">${flow([[t, 4, 4 + w]], 2)}</div>`)}</div>
      <div class="row cmd">${flow([["Command:", 4, 99]], 2)}</div>
      <div class="band"></div>
      <div class="tabs">${[0, 1, 2, 3, 4, 5, 6, 7, 8, 9].map(i => this.tab(i))}</div>
      <div class="tools">${STD.map(([s, m]) => icon(s, m))}</div>
      <div class="mid">
        <div class="ts">${TS.map(([s, k]) => html`<div class="cellb ${k === 0 || k === 3 ? "small" : ""} ${k === 3 ? "on" : ""} ${k === 2 ? "gap" : ""}">${icon(s)}</div>`)}</div>
        <div class="pal">${PAL.map(([s, m]) => icon(s, m))}</div>
        <div class="view">
          <svg width="816" height="1335" viewBox="122 299 816 1335">${unsafeSVG(scene)}
            <g font-size="15" fill="#555" font-family="Liberation Sans, sans-serif"><text x="160" y="1575">z</text><text x="180" y="1588">x</text><text x="137" y="1587">y</text></g>
          </svg>
          <div class="chip segoe">${flow([["SW", 8, 34]], 0)}<i></i><b></b></div>
        </div>
      </div>
      <div class="vtabs">${this.vtab("SW", 53, 14, 28, true)}${this.vtab("Top", 55, 14, 30)}${this.vtab("Front", 68, 14, 43)}${this.vtab("Top", 54, 13, 30)}${this.vtab("", 46, 0, 0)}</div>
      <div class="row checks">
        ${this.check("End", 2, 28, 3, true)}${this.check("Near", 6, 34, 3, true)}${this.check("Point", 5, 36, 3, true)}${this.check("Mid", 5, 24, 3, true)}${this.check("Cen", 6, 29, 3, false)}${this.check("Int", 5, 19, 3, true)}${this.check("Perp", 5, 33, 3, true)}${this.check("Tan", 5, 27, 3, false)}${this.check("Quad", 5, 38, 3, false)}${this.check("Knot", 6, 33, 3, false)}${this.check("Vertex", 5, 47, 3, false)}${this.check("Project", 5, 49, 3, false, true)}${this.check("Disable", 6, 53, 3, false, true)}
      </div>
      <div class="row status">${cells.map(([t, w, a, tw, k]) => html`<div class="cell ${k === "on" ? "on" : ""}" style=${styleMap({ width: w + "px" })}>${k === "sw" ? html`<div class="swatch"></div>` : ""}<fit-label .text=${t} .w=${tw} style=${styleMap({ marginLeft: a + "px" })}></fit-label></div>`)}</div>
    </div><div class="under"></div>`;
  }
}

/* ================= Grasshopper canvas ================= */
const SANS = "Open Sans, Noto Sans, sans-serif";
const MONO = "Liberation Mono, monospace";
const txt = (x: number, y: number, w: number, t: string, fs: number, fam: string, fill = "#111", extra = "") =>
  svg`<text x=${x} y=${y} textLength=${w} lengthAdjust="spacingAndGlyphs" font-size=${fs} font-family=${fam} fill=${fill} font-style=${extra || "normal"}>${t}</text>`;
const wire = (x1: number, y1: number, x2: number, y2: number) => {
  const dx = x2 - x1, c = Math.max(dx / 2, Math.hypot(dx, y2 - y1) * 0.45);
  return svg`<path d=${`M${x1} ${y1}C${x1 + c} ${y1} ${x2 - c} ${y2} ${x2} ${y2}`} fill="none" stroke="#57554f" stroke-width="3.800"/>`;
};
const grip = (x: number, y: number) => svg`<circle cx=${x} cy=${y} r="4.300" fill="#fff" stroke="#0a0a0a" stroke-width="2.400"/>`;
const capsule = (x: number, y: number, w: number, h: number) => svg`<rect x=${x} y=${y} width=${w} height=${h} rx="4" fill="url(#cap)" stroke="#26262c" stroke-width="1.400"/><path d=${`M${x + 3} ${y + 2}H${x + w - 3}`} stroke="#fff" stroke-width="2"/><rect x=${x + 1.5} y=${y + 2} width=${w - 3} height=${Math.min(9, h * 0.35)} fill="#fff" opacity=".38"/>`;
const tag = (x: number, y: number, w: number, h: number, t: string, len: number) => svg`<rect x=${x} y=${y} width=${w} height=${h} rx="4" fill="url(#tag)" stroke="#0c0c0c" stroke-width="1.500"/><rect x=${x + 2} y=${y + 2} width=${w - 4} height="8" rx="2" fill="#fff" opacity=".3"/><text transform=${`translate(${x + w / 2 + 8.5} ${y + h / 2 + len / 2}) rotate(-90)`} textLength=${len} lengthAdjust="spacingAndGlyphs" font-size="24" font-weight="bold" font-family=${SANS} fill="#fff">${t}</text>`;
const concat = (x: number, y: number) => svg`${grip(x - 1, y + 26.8)}${grip(x - 1, y + 76.5)}${grip(x + 95, y + 51.8)}${capsule(x, y, 94, 104.5)}
  ${tag(x + 30, y + 3, 31, 98.5, "Concat", 84)}
  ${txt(x + 9, y + 34, 12, "A", 19.5, SANS)}${txt(x + 11, y + 83.5, 10, "B", 19.5, SANS)}${txt(x + 67, y + 59, 11, "R", 19.5, SANS)}`;
const panel = (x: number, y: number, w: number, h: number, g: number) => svg`${grip(x - 1, g)}${grip(x + w + 2, g)}<rect x=${x} y=${y} width=${w} height=${h} rx="3" fill="#fff95c" stroke="#2a2a10" stroke-width="1.400"/><path d=${`M${x + 2} ${y + 2}H${x + w - 2}`} stroke="#fffcc0" stroke-width="1.500"/>`;

@customElement("gh-canvas")
class GhCanvas extends LitElement {
  static styles = css`:host { display: block; width: 1926px; height: 1487px; flex: none; } svg { display: block; }`;
  render() {
    const vs = [...Array(11).keys()].map(i => 1013.5 + 187.55 * i), hs = [...Array(24).keys()].map(i => 253.3 + 62.52 * i);
    let zig = "M2372 836";
    for (let i = 0; i < 11; i++) zig += `L2379.500 ${841 + i * 10}L2375 ${846 + i * 10}`;
    const green = "#1c4a1c", ink = "#2c2b10", soft = "#44684a";
    return html`<svg width="1926" height="1487" viewBox="941 225 1926 1487">
      <defs>
        <linearGradient id="cap" x1="0" y1="0" x2="0" y2="1"><stop offset="0" stop-color="#c2c2cc"/><stop offset=".2" stop-color="#a9a9b8"/><stop offset="1" stop-color="#8e8c9c"/></linearGradient>
        <linearGradient id="tag" x1="0" y1="0" x2="0" y2="1"><stop offset="0" stop-color="#4c4c4c"/><stop offset="1" stop-color="#2b2b2b"/></linearGradient>
        <linearGradient id="tm" x1="0" y1="0" x2="0" y2="1"><stop offset="0" stop-color="#dcdcdc"/><stop offset="1" stop-color="#b2b2b2"/></linearGradient>
        <radialGradient id="cmp"><stop offset="0" stop-color="#eee"/><stop offset=".5" stop-color="#ddd"/><stop offset="1" stop-color="#b0b0b0"/></radialGradient>
      </defs>
      <rect x="941" y="225" width="1926" height="1487" fill="#d4d0c8"/>
      <g stroke="#b9b6ae" stroke-width="1.200">${vs.map(x => svg`<path d=${`M${x} 225V1712`}/>`)}${hs.map(y => svg`<path d=${`M941 ${y}H2867`}/>`)}</g>
      <rect x="1334.500" y="641" width="310.500" height="53" fill="#f05653" stroke="#a8645c" stroke-width="1"/>
      ${wire(1637, 668, 1884, 687.5)}${wire(1954, 687.5, 2227, 863.7)}${wire(1666, 845, 1853, 1026.8)}${wire(943, 1031.5, 1636, 1102.8)}
      ${wire(1429, 1220.3, 1636, 1152.8)}${wire(1735, 1128, 1853, 1076.5)}${wire(1953, 1051.8, 1988, 1127.8)}${wire(1897, 1293, 1988, 1177.8)}
      ${wire(2086, 1153, 2227, 917.8)}${wire(2086, 1153, 2211, 1181.2)}
      ${grip(941.5, 1031.5)}${grip(1633.5, 668)}${capsule(1347, 653.5, 286, 28)}
      ${txt(1360.5, 675, 194, "Toggle RH Command", 19.5, SANS)}
      <rect x="1572" y="656" width="58.500" height="23.500" rx="2" fill="url(#tag)" stroke="#111" stroke-width="1.500"/>
      ${txt(1581, 675, 39, "True", 19.5, SANS, "#fff", "italic")}
      ${grip(1885.5, 687.5)}${grip(1951.5, 687.5)}${capsule(1886.5, 675, 64, 25.5)}${txt(1898, 694.5, 39.5, "Bool", 19.5, SANS)}
      ${panel(986, 819, 675.5, 52.5, 845)}${txt(991, 850, 653, "SelAll _Enter -Export C:\\test\\cfd\\models\\mars\\bakery\\", 20, MONO, ink)}
      ${panel(1226, 1192.5, 200.5, 55.5, 1220.3)}${txt(1296, 1225, 49, ".stp", 20, MONO, ink)}
      ${panel(1227, 1266.6, 666.5, 52.5, 1293)}${txt(1284, 1286, 554, "_Enter _Enter -SelLayer am_srf _Enter _Delete", 20, MONO, ink)}${txt(1518, 1309, 73, "_Enter", 20, MONO, ink)}
      ${concat(1638, 1076)}${concat(1855.7, 1000)}${concat(1989.7, 1101)}
      ${grip(2230, 863.7)}${grip(2230, 917.8)}
      <path d=${zig + "L2375 948H2360V836Z"} fill="#a9a9b8" stroke="#26262c" stroke-width="1.200"/>
      ${capsule(2231, 835.5, 143, 112.5)}
      ${tag(2342, 837, 31, 109, "RhCOM", 89)}
      ${txt(2290, 871.5, 44, "Send", 19.5, SANS)}${txt(2241, 925.5, 93, "Command", 19.5, SANS)}
      <path d="M2229.500 950.500H2297L2302 944.500L2307 950.500H2374.500V977.500H2229.500Z" fill="url(#tm)" stroke="#2c2c2c" stroke-width="1.500"/>
      ${txt(2235.5, 968, 131, "307ms (13%)", 19.5, MONO, "#222")}
      ${grip(2213, 1181.2)}
      <rect x="2214" y="1069" width="670" height="226" rx="3" fill="#fff" stroke="#3c3c3c" stroke-width="1.500"/>
      <path d="M2216 1072H2867V1101.500H2216Z" fill="#d6d6d6"/><path d="M2237.600 1071V1294" stroke="#cfcfcf"/>
      ${txt(2831, 1089, 31, "(0;", 20, MONO, green)}
      ${txt(2242, 1117.5, 258, "SelAll _Enter -Export", 20, MONO, soft)}
      ${txt(2221, 1140, 11, "0", 20, MONO, green)}${txt(2242, 1140, 592, "C:\\test\\cfd\\models\\mars\\bakery\\123456.stp _Enter", 20, MONO, green)}
      ${txt(2242, 1163, 555, "_Enter -SelLayer am_srf _Enter _Delete _Enter", 20, MONO, soft)}
      <path d="M941 1684H946.500V1711H941Z" fill="#888" stroke="#111" stroke-width="1.500"/><path d="M941 587V593" stroke="#111" stroke-width="3"/>
      <path d="M2829 1664A21 21 0 0 0 2818.500 1693" fill="none" stroke="#000" stroke-width="5"/><path d="M2806 1680L2812 1675.500L2816 1680L2811 1684Z" fill="#000"/>
      <circle cx="2837.500" cy="1682.500" r="19.500" fill="url(#cmp)" stroke="#333" stroke-width="1.500"/><circle cx="2837.500" cy="1682.500" r="18" fill="none" stroke="#fff" stroke-width="1.600"/>
      <path d="M2835 1664.500H2843L2839 1670ZM2833 1701H2841L2836 1695ZM2819.500 1678V1686L2825 1681ZM2856 1680V1688L2850 1684Z" fill="#fff"/>
    </svg>`;
  }
}

/* ================= Grasshopper window ================= */
@customElement("gh-window")
class GhWindow extends LitElement {
  static styles = [barFont, css`
    :host { width: 1932px; height: 1742px; }
    .win { height: 1740px; box-sizing: border-box; border: 1px solid #8fbf4d; display: flex; flex-direction: column; background: #f0f0f0; }
    .under { height: 2px; background: #050505; }
    .title { height: 45px; background: #fff; }
    .title .sys { margin-left: auto; }
    .menu { height: 30px; background: linear-gradient(90deg, #f0f0f0, #fcfcfc); }
    .doc { margin-left: auto; padding-right: 11px; }
    .row.tabs { height: 21px; color: #777; align-items: flex-end; overflow: visible; line-height: 20px; font-size: 17px; }
    .tabs .on { width: 74px; height: 22px; color: #000; border: 1px solid #999; border-bottom: 0; border-radius: 6px 8px 0 0; background: linear-gradient(#fff, #ddd); box-sizing: border-box; padding-left: 9px; line-height: 19px; flex: none; margin-bottom: -1px; z-index: 1; }
    .ribbon { height: 92px; flex: none; display: flex; box-sizing: border-box; padding-top: 3px; background: linear-gradient(#d6d6d6, #f0f0f0); border-top: 1px solid #999; border-bottom: 2px solid #6c6c6c; border-top-right-radius: 8px; align-items: flex-start; }
    .grp { height: 72px; box-sizing: border-box; border: 1px solid #999; border-radius: 5px; background: linear-gradient(#dcdcdc, #eee); display: flex; flex-direction: column; overflow: hidden; flex: none; }
    .icons { height: 58px; display: flex; }
    .col { display: flex; flex-direction: column; width: 28px; flex: none; }
    .sep { width: 1px; height: 48px; margin: 4px 5px 0 4.500px; background: #b4b4b4; flex: none; }
    .cap { height: 13px; background: #1b1b1b; color: #fff; font-size: 11px; display: flex; align-items: center; line-height: 12px; margin: 0 -1px; }
    .cap b { margin-left: auto; margin-right: 2px; color: #bbb; font-size: 12px; }
    .bar { height: 36px; background: linear-gradient(#fff, #f1f1f1); display: flex; align-items: center; flex: none; }
    .vsep { width: 1px; height: 25px; background: #b8b8b8; }
    .combo { width: 103px; height: 36px; margin-left: 4px; background: #fff; border: 1px solid #777; box-sizing: border-box; display: flex; align-items: center; font-size: 20px; flex: none; }
    .combo svg { margin-left: 28px; }
    .right { margin-left: auto; margin-right: 1px; display: flex; align-items: center; }
    .sel { border: 1px solid #0a7ad8; outline: 1px solid #7ab8ea; outline-offset: -2px; width: 26px; height: 31px; display: grid; place-items: center; background: #e8f2fb; }
    gh-canvas { margin-left: 2px; }
    .status { height: 27px; background: linear-gradient(90deg, #f1f1f1, #fcfcfc); border-top: 2px solid #fff; font-size: 17px; padding-top: 1px; }
    .ver { margin-left: auto; color: #777; }
  `];
  render() {
    const menu: Span[] = [["File", 958, 985], ["Edit", 1007, 1035], ["View", 1056, 1092], ["Display", 1114, 1169], ["Solution", 1190, 1250], ["Help", 1272, 1306]];
    const tabs: Span[] = [["Maths", 1024, 1067], ["Sets", 1087, 1119], ["Vector", 1138, 1184], ["Curve", 1203, 1246], ["Surface", 1265, 1320], ["Mesh", 1339, 1378], ["Intersect", 1398, 1458], ["Transform", 1480, 1551], ["Display", 1571, 1625], ["Ladybug", 1643, 1705], ["Wb", 1725, 1748], ["Honeybee", 1767, 1841], ["Millipede", 1860, 1925], ["Kangaroo2", 1945, 2022], ["Kangaroo", 2041, 2111], ["LunchBox", 2130, 2202], ["TT Toolbox", 2221, 2303], ["Human", 2323, 2373], ["Sonic", 2393, 2434], ["Karamba", 2453, 2518], ["Monolith", 2537, 2598], ["Extra", 2617, 2654], ["RhinoNest", 2673, 2750], ["Rabbit", 2769, 2817]];
    const drop = (w = 8) => html`<svg class="ic" width=${w} height="28" viewBox=${`-4 -14 ${w} 28`}>${unsafeSVG(BAR_L.arrow)}</svg>`;
    return html`${defs}<div class="win">
      <div class="row title segoe">${flow([["Grasshopper - MacroGenerative_03-cfd*", 950, 1267]], 939)}
        <svg class="ic sys" width="183" height="44" viewBox="2686 1 183 44"><path d="M2687 22.500H2702M2756.500 15.500H2771V30H2756.500ZM2827 15L2842 30M2842 15L2827 30" fill="none" stroke="#111" stroke-width="1.200"/></svg></div>
      <div class="row menu">${flow(menu, 939)}<div class="doc"><fit-label .text=${"MacroGenerative_03-cfd"} .w=${184}></fit-label></div></div>
      <div class="row tabs"><div class="on"><fit-label .text=${"Params"} .w=${54}></fit-label></div>${flow(tabs, 1013)}</div>
      <div class="ribbon">${RIBBON.map(g => html`<div class="grp" style=${styleMap({ width: g.w + "px", marginLeft: g.gap + "px" })}>
        <div class="icons" style=${styleMap({ paddingLeft: g.pad - 1 + "px" })}>${g.cols.map(c => c ? html`<div class="col">${c.map(s => icon(s))}</div>` : html`<div class="sep"></div>`)}</div>
        <div class="cap">${flow([g.label], 0)}<b>+</b></div></div>`)}</div>
      <div class="bar">
        ${space(4)}${icon(BAR_L.open)}${space(2)}${icon(BAR_L.save)}${space(5)}<div class="vsep"></div>
        <div class="combo segoe">${flow([["125%", 3, 51]], 0)}<svg width="16" height="16"><path d="M3 5L8 10.500L13 5" fill="none" stroke="#555" stroke-width="1.300"/></svg></div>
        ${space(1)}${icon(BAR_L.fit)}${drop()}${space(4)}${icon(BAR_L.eye)}${space(2)}${drop()}${space(3)}${icon(BAR_L.brush)}
        <div class="right">${icon(BAR_R.shaded)}${space(1)}${icon(BAR_R.wire)}<div class="sel">${icon(BAR_R.red)}</div>${space(9)}<div class="vsep"></div>${space(6)}${icon(BAR_R.green)}${space(1)}${icon(BAR_R.half)}${space(2)}<div class="vsep"></div>${space(1)}${icon(BAR_R.blue)}${drop(14)}</div>
      </div>
      <gh-canvas></gh-canvas>
      <div class="row status"><svg width="24" height="24" viewBox="-12 -12 24 24"><circle r="8" fill="#1c8ad8" stroke="#0a2a80" stroke-width="2"/><path d="M0-5V1M0 3.500V5" stroke="#fff" stroke-width="2.400"/></svg>${flow([["Solution completed in ~2.9 seconds (280 seconds ago)", 963, 1369]], 963)}
        <fit-label class="ver" .text=${"0.9.0076"} .w=${61}></fit-label>
        <svg width="27" height="24"><path d="M21 11h2M17 15h2M21 15h2M13 19h2M17 19h2M21 19h2" stroke="#999" stroke-width="2.200"/></svg></div>
    </div><div class="under"></div>`;
  }
}

/* ================= root ================= */
@customElement("app-root")
class AppRoot extends LitElement {
  static styles = css`
    :host { display: block; width: 2879px; height: 1742px; position: relative; overflow: hidden; background: #2b2b2b; }
    .desk { display: flex; }
    rhino-window, gh-window { flex: none; }
    .strip { flex: 1; height: 1742px; background: linear-gradient(#dcdcdc 0 64px, #111 64px 115px, #2b2b2b 115px 1227px, #131313 1227px 1278px, #2b2b2b 1278px 1707px, #555 1707px 1740px, #111 1740px); }
    .shadow { position: absolute; left: 922px; top: 0; width: 16px; height: 1740px; background: linear-gradient(90deg, transparent, rgba(0, 0, 0, .22)); }
    .ink { position: absolute; left: 0; top: 0; pointer-events: none; }
  `;
  render() {
    return html`<div class="desk"><rhino-window></rhino-window><gh-window></gh-window><div class="strip"></div></div>
      <div class="shadow"></div>
      <svg class="ink" width="2879" height="1742"><g transform="translate(2140 800) scale(.4713 .3444)"><path vector-effect="non-scaling-stroke" fill="none" stroke="#ff0000" stroke-width="4.700" stroke-linejoin="round" stroke-linecap="round"
        d="M428 718H360Q300 722 250 750L240 770L195 800C170 830 150 860 140 900L130 960L126 1000L130 1040L150 1085L200 1140L235 1172L260 1195L300 1222L345 1245L380 1260L430 1275L480 1287L550 1293L650 1297H1030L1105 1292L1160 1275L1195 1263L1280 1252L1330 1235L1390 1220L1425 1198L1455 1180L1490 1145L1520 1110L1530 1090L1550 1060L1553 1000L1545 940L1525 890L1500 855L1470 830L1440 815L1410 805L1350 797L1280 785L1220 777L1120 772L960 767L910 757L850 748L780 740L700 736H320L260 748"/></g></svg>`;
  }
}
